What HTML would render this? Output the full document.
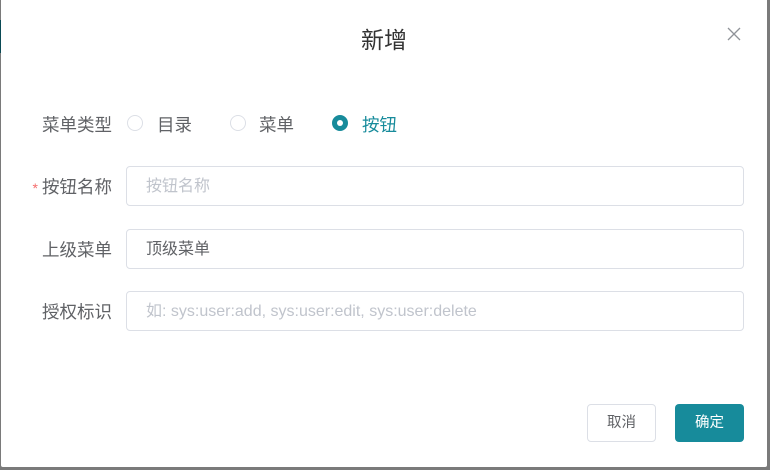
<!DOCTYPE html>
<html><head><meta charset="utf-8"><style>
*{box-sizing:border-box;margin:0;padding:0}
body{width:770px;height:470px;background:#7a7a7a;position:relative;overflow:hidden;font-family:"Liberation Sans","Noto Sans CJK SC",sans-serif}
.side{position:absolute;left:0;top:20px;width:1px;height:33px;background:#0a4a55}
.dlg{position:absolute;left:1px;top:0;width:766px;height:467px;background:#fff;border-radius:0 0 2px 2px}
.title{position:absolute;left:0;right:0;top:25px;text-align:center;font-size:23px;color:#333;line-height:30px}
.close{position:absolute;left:726px;top:27px;width:14px;height:14px}
.lbl{position:absolute;right:655px;font-size:17.5px;color:#606266;line-height:24px;white-space:nowrap}
.lbl .st{color:#f56c6c;font-size:14px;margin-right:4px}
.inp{position:absolute;left:125px;width:618px;height:40px;border:1px solid #dcdfe6;border-radius:4px;font-size:16px;line-height:39px;padding-left:19px;color:#c0c4cc}
.radio{position:absolute;top:115px;width:16px;height:16px;border:1px solid #dcdfe6;border-radius:50%}
.rt{position:absolute;top:113px;font-size:17.5px;color:#606266;line-height:24px}
.btn{position:absolute;top:404px;height:38px;border-radius:4px;font-size:14.5px;text-align:center;line-height:37px}
</style></head><body>
<div class="side"></div>
<div class="dlg">
<div class="title">新增</div>
<svg class="close" viewBox="0 0 14 14"><path d="M1 1L13 13M13 1L1 13" stroke="#909399" stroke-width="1.3"/></svg>
<div class="lbl" style="top:113px">菜单类型</div>
<div class="radio" style="left:126px"></div><div class="rt" style="left:156px">目录</div>
<div class="radio" style="left:229px"></div><div class="rt" style="left:258px">菜单</div>
<div class="radio" style="left:331px;background:#178b9b;border-color:#178b9b"><div style="position:absolute;left:4px;top:4px;width:6px;height:6px;border-radius:50%;background:#fff"></div></div>
<div class="rt" style="left:361px;color:#178b9b">按钮</div>
<div class="lbl" style="top:175px"><span class="st">*</span>按钮名称</div>
<div class="inp" style="top:166px">按钮名称</div>
<div class="lbl" style="top:238px">上级菜单</div>
<div class="inp" style="top:229px;color:#606266">顶级菜单</div>
<div class="lbl" style="top:300px">授权标识</div>
<div class="inp" style="top:291px">如: sys:user:add, sys:user:edit, sys:user:delete</div>
<div class="btn" style="left:586px;width:69px;border:1px solid #dcdfe6;color:#606266">取消</div>
<div class="btn" style="left:674px;width:69px;background:#178b9b;color:#fff;line-height:38px">确定</div>
</div>
</body></html>
